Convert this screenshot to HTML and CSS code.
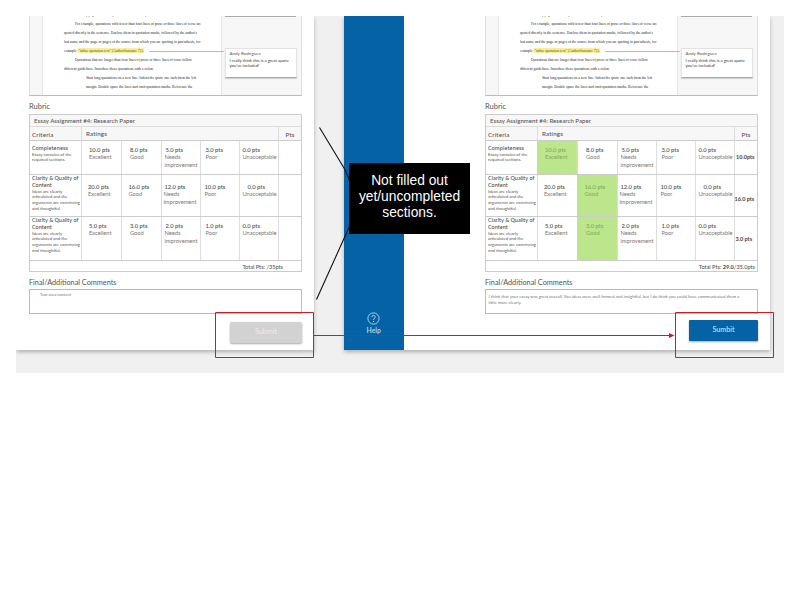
FILE: index.html
```html
<!DOCTYPE html>
<html lang="en">
<head>
<meta charset="utf-8">
<title>Rubric grading flow</title>
<link rel="stylesheet" href="styles.css">
</head>
<body>
<main class="board">
  <section class="screen before">
    <div class="content">
      <div class="document">
        <div class="paper">
          <p class="l0">work is cited by page number in parenthetical citations, and</p>
          <p class="in l1">For example, quotations with fewer than four lines of prose or three lines of verse are</p>
          <p class="l2">quoted directly in the sentence. Enclose them in quotation marks, followed by the author's</p>
          <p class="l3">last name and the page or pages of the source from which you are quoting in parenthesis, for</p>
          <p class="l4">example: <mark>"inline quotation text" (AuthorSurname 75).</mark></p>
          <p class="in l5">Quotations that are longer than four lines of prose or three lines of verse follow</p>
          <p class="l6">different guidelines. Introduce these quotations with a colon:</p>
          <p class="in2 l7">Start long quotations on a new line. Indent the quote one inch from the left</p>
          <p class="in2 l8">margin. Double space the lines and omit quotation marks. Reference the</p>
        </div>
        <aside class="notes"><div class="edge"></div><div class="note"><b>Andy Rodriguez</b><span>I really think this is a great quote<br>you've included!</span></div></aside>
        <i class="connector"></i>
      </div>
      <h2>Rubric</h2>
      <div class="rubric">
        <div class="title"><span>Essay Assignment #4: Research Paper</span></div>
        <div class="row head"><div>Criteria</div><div class="ratings">Ratings</div><div class="pts">Pts</div></div>
        <div class="row r1">
          <div class="crit"><b>Completeness</b><small>Essay contains of the<br>required sections.</small></div>
          <div class="c1"><b>10.0 pts</b>Excellent</div><div class="c2"><b>8.0 pts</b>Good</div><div class="c3"><b>5.0 pts</b>Needs<br>improvement</div><div class="c4"><b>3.0 pts</b>Poor</div><div class="c5"><b>0.0 pts</b>Unacceptable</div><div class="score"></div>
        </div>
        <div class="row r2">
          <div class="crit"><b>Clarity &amp; Quality of<br>Content</b><small>Ideas are clearly<br>articulated and the<br>arguments are convincing<br>and thoughtful.</small></div>
          <div class="c1"><b>20.0 pts</b>Excellent</div><div class="c2"><b>16.0 pts</b>Good</div><div class="c3"><b>12.0 pts</b>Needs<br>improvement</div><div class="c4"><b>10.0 pts</b>Poor</div><div class="c5"><b>0.0 pts</b>Unacceptable</div><div class="score"></div>
        </div>
        <div class="row r3">
          <div class="crit"><b>Clarity &amp; Quality of<br>Content</b><small>Ideas are clearly<br>articulated and the<br>arguments are convincing<br>and thoughtful.</small></div>
          <div class="c1"><b>5.0 pts</b>Excellent</div><div class="c2"><b>3.0 pts</b>Good</div><div class="c3"><b>2.0 pts</b>Needs<br>improvement</div><div class="c4"><b>1.0 pts</b>Poor</div><div class="c5"><b>0.0 pts</b>Unacceptable</div><div class="score"></div>
        </div>
        <div class="total">Total Pts: /35pts</div>
      </div>
      <h2 class="comments-title">Final/Additional Comments</h2>
      <div class="comments">Text area content</div>
      <div class="submit disabled">Submit</div>
    </div>
  </section>

  <section class="screen after">
    <nav class="sidebar">
      <svg width="13" height="13" viewBox="0 0 13 13" fill="none" stroke="#a9d0ec"><circle cx="6.5" cy="6.5" r="5.6"/><path d="M4.8 5.2C4.8 2.8 8.3 2.8 8.3 5C8.3 6.3 6.5 6.3 6.5 7.9M6.5 9V10"/></svg>
      <span>Help</span>
    </nav>
    <div class="content">
      <div class="document">
        <div class="paper">
          <p class="l0">work is cited by page number in parenthetical citations, and</p>
          <p class="in l1">For example, quotations with fewer than four lines of prose or three lines of verse are</p>
          <p class="l2">quoted directly in the sentence. Enclose them in quotation marks, followed by the author's</p>
          <p class="l3">last name and the page or pages of the source from which you are quoting in parenthesis, for</p>
          <p class="l4">example: <mark>"inline quotation text" (AuthorSurname 75).</mark></p>
          <p class="in l5">Quotations that are longer than four lines of prose or three lines of verse follow</p>
          <p class="l6">different guidelines. Introduce these quotations with a colon:</p>
          <p class="in2 l7">Start long quotations on a new line. Indent the quote one inch from the left</p>
          <p class="in2 l8">margin. Double space the lines and omit quotation marks. Reference the</p>
        </div>
        <aside class="notes"><div class="edge"></div><div class="note"><b>Andy Rodriguez</b><span>I really think this is a great quote<br>you've included!</span></div></aside>
        <i class="connector"></i>
      </div>
      <h2>Rubric</h2>
      <div class="rubric">
        <div class="title"><span>Essay Assignment #4: Research Paper</span></div>
        <div class="row head"><div>Criteria</div><div class="ratings">Ratings</div><div class="pts">Pts</div></div>
        <div class="row r1">
          <div class="crit"><b>Completeness</b><small>Essay contains of the<br>required sections.</small></div>
          <div class="c1 picked"><b>10.0 pts</b>Excellent</div><div class="c2"><b>8.0 pts</b>Good</div><div class="c3"><b>5.0 pts</b>Needs<br>improvement</div><div class="c4"><b>3.0 pts</b>Poor</div><div class="c5"><b>0.0 pts</b>Unacceptable</div><div class="score">10.0pts</div>
        </div>
        <div class="row r2">
          <div class="crit"><b>Clarity &amp; Quality of<br>Content</b><small>Ideas are clearly<br>articulated and the<br>arguments are convincing<br>and thoughtful.</small></div>
          <div class="c1"><b>20.0 pts</b>Excellent</div><div class="c2 picked"><b>16.0 pts</b>Good</div><div class="c3"><b>12.0 pts</b>Needs<br>improvement</div><div class="c4"><b>10.0 pts</b>Poor</div><div class="c5"><b>0.0 pts</b>Unacceptable</div><div class="score">16.0 pts</div>
        </div>
        <div class="row r3">
          <div class="crit"><b>Clarity &amp; Quality of<br>Content</b><small>Ideas are clearly<br>articulated and the<br>arguments are convincing<br>and thoughtful.</small></div>
          <div class="c1"><b>5.0 pts</b>Excellent</div><div class="c2 picked"><b>3.0 pts</b>Good</div><div class="c3"><b>2.0 pts</b>Needs<br>improvement</div><div class="c4"><b>1.0 pts</b>Poor</div><div class="c5"><b>0.0 pts</b>Unacceptable</div><div class="score">3.0 pts</div>
        </div>
        <div class="total">Total Pts: <strong>29.0</strong>/35.0pts</div>
      </div>
      <h2 class="comments-title">Final/Additional Comments</h2>
      <div class="comments">I think that your essay was great overall. You ideas were well formed and insightful, but I do think you could have communicated them a<br>little more clearly.</div>
      <div class="submit">Sumbit</div>
    </div>
  </section>
</main>

<svg class="annotations" width="800" height="600" fill="none">
  <path d="M319.5 127.5L344 168Q349 177 351 186M316.5 299.5L351 223" stroke="#111" stroke-width="1.1"/>
  <g stroke="#c4202b"><path d="M215.5 312.5H313.5V357.5H215.5ZM675.5 312.5H773.5V357.5H675.5ZM313.5 335.5H671"/></g>
  <path d="M669 333L674.500 335.500L669 338Z" fill="#c4202b"/>
</svg>
<div class="callout">Not filled out<br>yet/uncompleted<br>sections.</div>
</body>
</html>
```
FILE: styles.css
```css
* { box-sizing: border-box; }
body { margin: 0; background: #fff; font-family: Lato, "Open Sans", sans-serif; color: #555; }
.board { display: flex; justify-content: space-between; margin: 16px; height: 357px; padding-right: 14px; background: #f0f0f0; overflow: hidden; }
.screen { height: 334px; background: #fff; box-shadow: 0 2px 4px rgba(0,0,0,.27); display: flex; }
.before { width: 298px; padding-left: 13px; }
.after { width: 426.500px; }
.sidebar { width: 60.500px; background: #0562a5; display: flex; flex-direction: column; align-items: center; padding-top: 296px; color: #a9d0ec; font-size: 6.800px; font-weight: 700; line-height: 9px; }
.sidebar svg { margin-bottom: 1px; flex: none; }
.after .content { margin-left: 81px; }
.content { width: 273px; flex: none; display: flex; flex-direction: column; }

.document { position: relative; height: 79.500px; flex: none; display: flex; overflow: hidden; background: #f7f7f7; border: solid #ddd; border-width: 0 1px 1px; border-bottom-color: #bbb; }
.paper { width: 180px; margin-left: 12px; margin-top: -5.500px; padding-left: 21px; background: #fff; border: solid #e4e4e4; border-width: 0 1px; font-family: "Liberation Serif", serif; font-size: 3.700px; line-height: 9px; color: #222; white-space: nowrap; }
.paper p { margin: 0; height: 9px; }
.paper .in { padding-left: 11px; }
.paper .in2 { padding-left: 22px; }
.paper mark { background: #f8ef9c; color: #544f20; padding: .8px 0; }
.notes { width: 78px; padding-left: 3px; }
.edge { width: 71px; height: 1px; background: #aaa; }
.note { width: 72px; height: 30px; margin-top: 30.500px; padding: 2px 3.500px; background: #fff; border: 1px solid #e2e2e2; border-bottom-color: #aaa; color: #333; font-size: 4.200px; line-height: 5px; white-space: nowrap; box-shadow: 0 1px 1px rgba(0,0,0,.15); }
.note b { display: block; font-weight: 400; font-size: 4.500px; line-height: 5px; margin-bottom: 2px; color: #555; }
.connector { position: absolute; left: 119px; top: 35px; width: 75px; height: 1px; background: #bbb; }

h2 { margin: 5px 0 0; height: 13px; line-height: 11px; font-size: 7.500px; font-weight: 400; color: #555; flex: none; white-space: nowrap; }
.rubric { flex: none; border: 1px solid #ccc; height: 158px; font-size: 6px; white-space: nowrap; }
.title { height: 12px; line-height: 12px; padding-left: 4px; background: #f7f7f7; font-weight: 500; letter-spacing: .06px; border-bottom: 1px solid #ddd; }
.row { display: grid; grid-template-columns: 51px 39.500px 40px 39px 39px 39px 1fr; border-bottom: 1px solid #ccc; }
.row > div { border-left: 1px solid #ddd; }
.row > div:first-child { border-left: 0; padding-left: 2px; }
.head { height: 14px; line-height: 15px; background: #f7f7f7; font-weight: 500; font-size: 6.200px; letter-spacing: .15px; }
.head .ratings { grid-column: 2 / 7; padding-left: 4px; line-height: 13px; }
.head .pts { padding-left: 7px; }
.r1 { height: 34px; }
.r2 { height: 42px; }
.r3 { height: 44px; }
.row b { display: block; font-weight: 500; color: #4c4c4c; font-size: 5.800px; }
.row .crit b { font-size: 5.500px; line-height: 7px; }
.row.r1 .crit b { letter-spacing: .15px; }
.row small { display: block; font-size: 4.300px; line-height: 5.700px; }
.crit { padding-top: 4px; }
.r2 .crit, .r3 .crit { padding-top: 0; }
.c1, .c2, .c3, .c4, .c5 { padding-top: 5px; font-size: 5.700px; line-height: 7.600px; color: #777; }
.r2 > div:not(.crit) { padding-top: 8px; }
.c1 { padding-left: 7px; }
.c2 { padding-left: 8.500px; }
.c3 { padding-left: 3px; }
.c4 { padding-left: 5px; }
.c5 { padding-left: 3px; }
.r2 .c1 { padding-left: 6px; }
.r2 .c2 { padding-left: 7px; }
.r2 .c3 { padding-left: 2px; }
.r2 .c4 { padding-left: 4px; }
.c3 b { padding-left: 1px; }
.r2 .c5 b { padding-left: 5px; }
.row .picked { background: #bce68c; border-color: #bce68c; color: #83a95d; }
.picked b { color: #83a95d; }
.row .score { font-size: 5.500px; font-weight: 700; line-height: 8px; padding: 12px 0 0 1.500px; color: #444; }
.row.r2 .score { padding-top: 20px; padding-left: 0; }
.row.r3 .score { padding-top: 18px; padding-left: 1px; }
.total { line-height: 12px; text-align: right; padding-right: 18px; font-size: 5.600px; font-weight: 500; }
.after .total { padding-right: 2px; }
.total strong { font-weight: 900; }
.comments-title { margin-top: 5px; height: 12.500px; font-size: 7.300px; }
.comments { flex: none; height: 25px; border: 1px solid #bbb; padding: 2px 10px; font-size: 4.100px; line-height: 5.800px; color: #777; white-space: nowrap; }
.after .comments { padding: 4px 2.500px; font-size: 4.250px; }
.submit { flex: none; align-self: flex-end; width: 69px; height: 21px; margin-top: 6px; background: #0562a5; color: #dcebf6; font-size: 7.200px; line-height: 20px; text-align: center; border-radius: 1px; box-shadow: 0 1px 2px rgba(0,0,0,.35); }
.submit.disabled { width: 72px; margin-top: 8px; background: #d2d2d2; color: #ededed; border-radius: 2px; }

.annotations { position: absolute; left: 0; top: 0; }
.callout { position: absolute; left: 349px; top: 163px; width: 121px; height: 71px; padding-top: 10px; background: #000; color: #fff; font: 13.800px/16px "Liberation Sans", sans-serif; text-align: center; white-space: nowrap; }
```
